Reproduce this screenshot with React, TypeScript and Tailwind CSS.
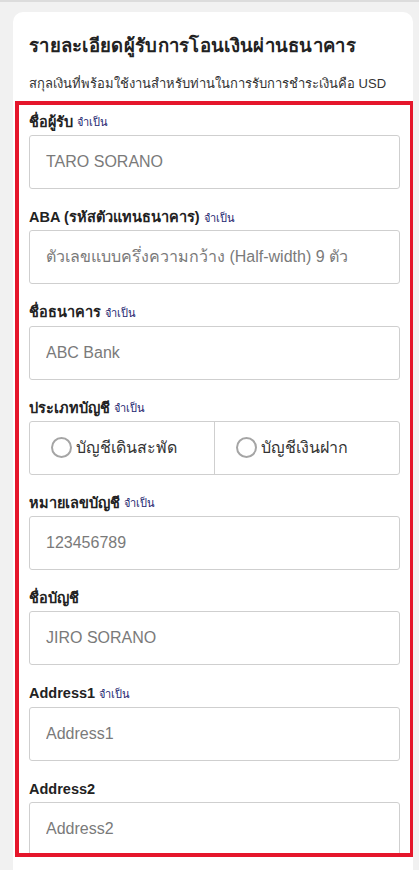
import React from 'react';

type Field = {
  label: string;
  required?: boolean;
  placeholder?: string;
  radio?: string[];
};

const fields: Field[] = [
  { label: 'ชื่อผู้รับ', required: true, placeholder: 'TARO SORANO' },
  {
    label: 'ABA (รหัสตัวแทนธนาคาร)',
    required: true,
    placeholder: 'ตัวเลขแบบครึ่งความกว้าง (Half-width) 9 ตัว',
  },
  { label: 'ชื่อธนาคาร', required: true, placeholder: 'ABC Bank' },
  { label: 'ประเภทบัญชี', required: true, radio: ['บัญชีเดินสะพัด', 'บัญชีเงินฝาก'] },
  { label: 'หมายเลขบัญชี', required: true, placeholder: '123456789' },
  { label: 'ชื่อบัญชี', placeholder: 'JIRO SORANO' },
  { label: 'Address1', required: true, placeholder: 'Address1' },
  { label: 'Address2', placeholder: 'Address2' },
];

const App = () => {
  return (
    <div className="min-h-[870px] bg-[#f1f1f1] font-['Liberation_Sans','Noto_Sans',sans-serif] text-[#222]">
      <div className="h-[2px] bg-[#dcdcdc]" />
      <div className="ml-[13px] mt-[10px] w-[400px] h-[858px] overflow-hidden rounded-t-[10px] bg-white">
        <div className="px-4 pt-[22px]">
          <h1 className="text-[18.5px] leading-[24px] font-bold tracking-[0.3px]">
            รายละเอียดผู้รับการโอนเงินผ่านธนาคาร
          </h1>
          <p className="mt-4 text-[13px] leading-[20px] text-[#333]">
            สกุลเงินที่พร้อมใช้งานสำหรับท่านในการรับการชำระเงินคือ USD
          </p>
        </div>
        <div className="mt-[7px] ml-[2px] w-[399px] h-[756px] overflow-hidden border-4 border-[#e5162b] px-[10px] pt-[7px]">
          {fields.map((f, idx) => (
            <div key={idx} className="mb-[18.3px]">
              <div className="h-[21px] mb-[2px] flex items-center gap-1">
                <span className="text-[14.5px] font-bold">{f.label}</span>
                {f.required && <span className="text-[11px] text-[#1c2570]">จำเป็น</span>}
              </div>
              {f.radio ? (
                <div className="h-[54px] flex rounded-[3px] border border-[#cfcfcf]">
                  {f.radio.map((r, i) => (
                    <label
                      key={i}
                      className={`flex-1 flex items-center pl-[21px] gap-[4px] text-[16px] text-[#333] ${
                        i === 0 ? 'border-r border-[#cfcfcf]' : ''
                      }`}
                    >
                      <span className="w-[21px] h-[21px] rounded-full border-2 border-[#a5a5a5]" />
                      {r}
                    </label>
                  ))}
                </div>
              ) : (
                <input
                  className="block w-full h-[54px] rounded-[3px] border border-[#cfcfcf] px-4 text-[16px] placeholder:text-[#7a7a7a] outline-none"
                  placeholder={f.placeholder}
                />
              )}
            </div>
          ))}
        </div>
      </div>
    </div>
  );
};

export default App;
